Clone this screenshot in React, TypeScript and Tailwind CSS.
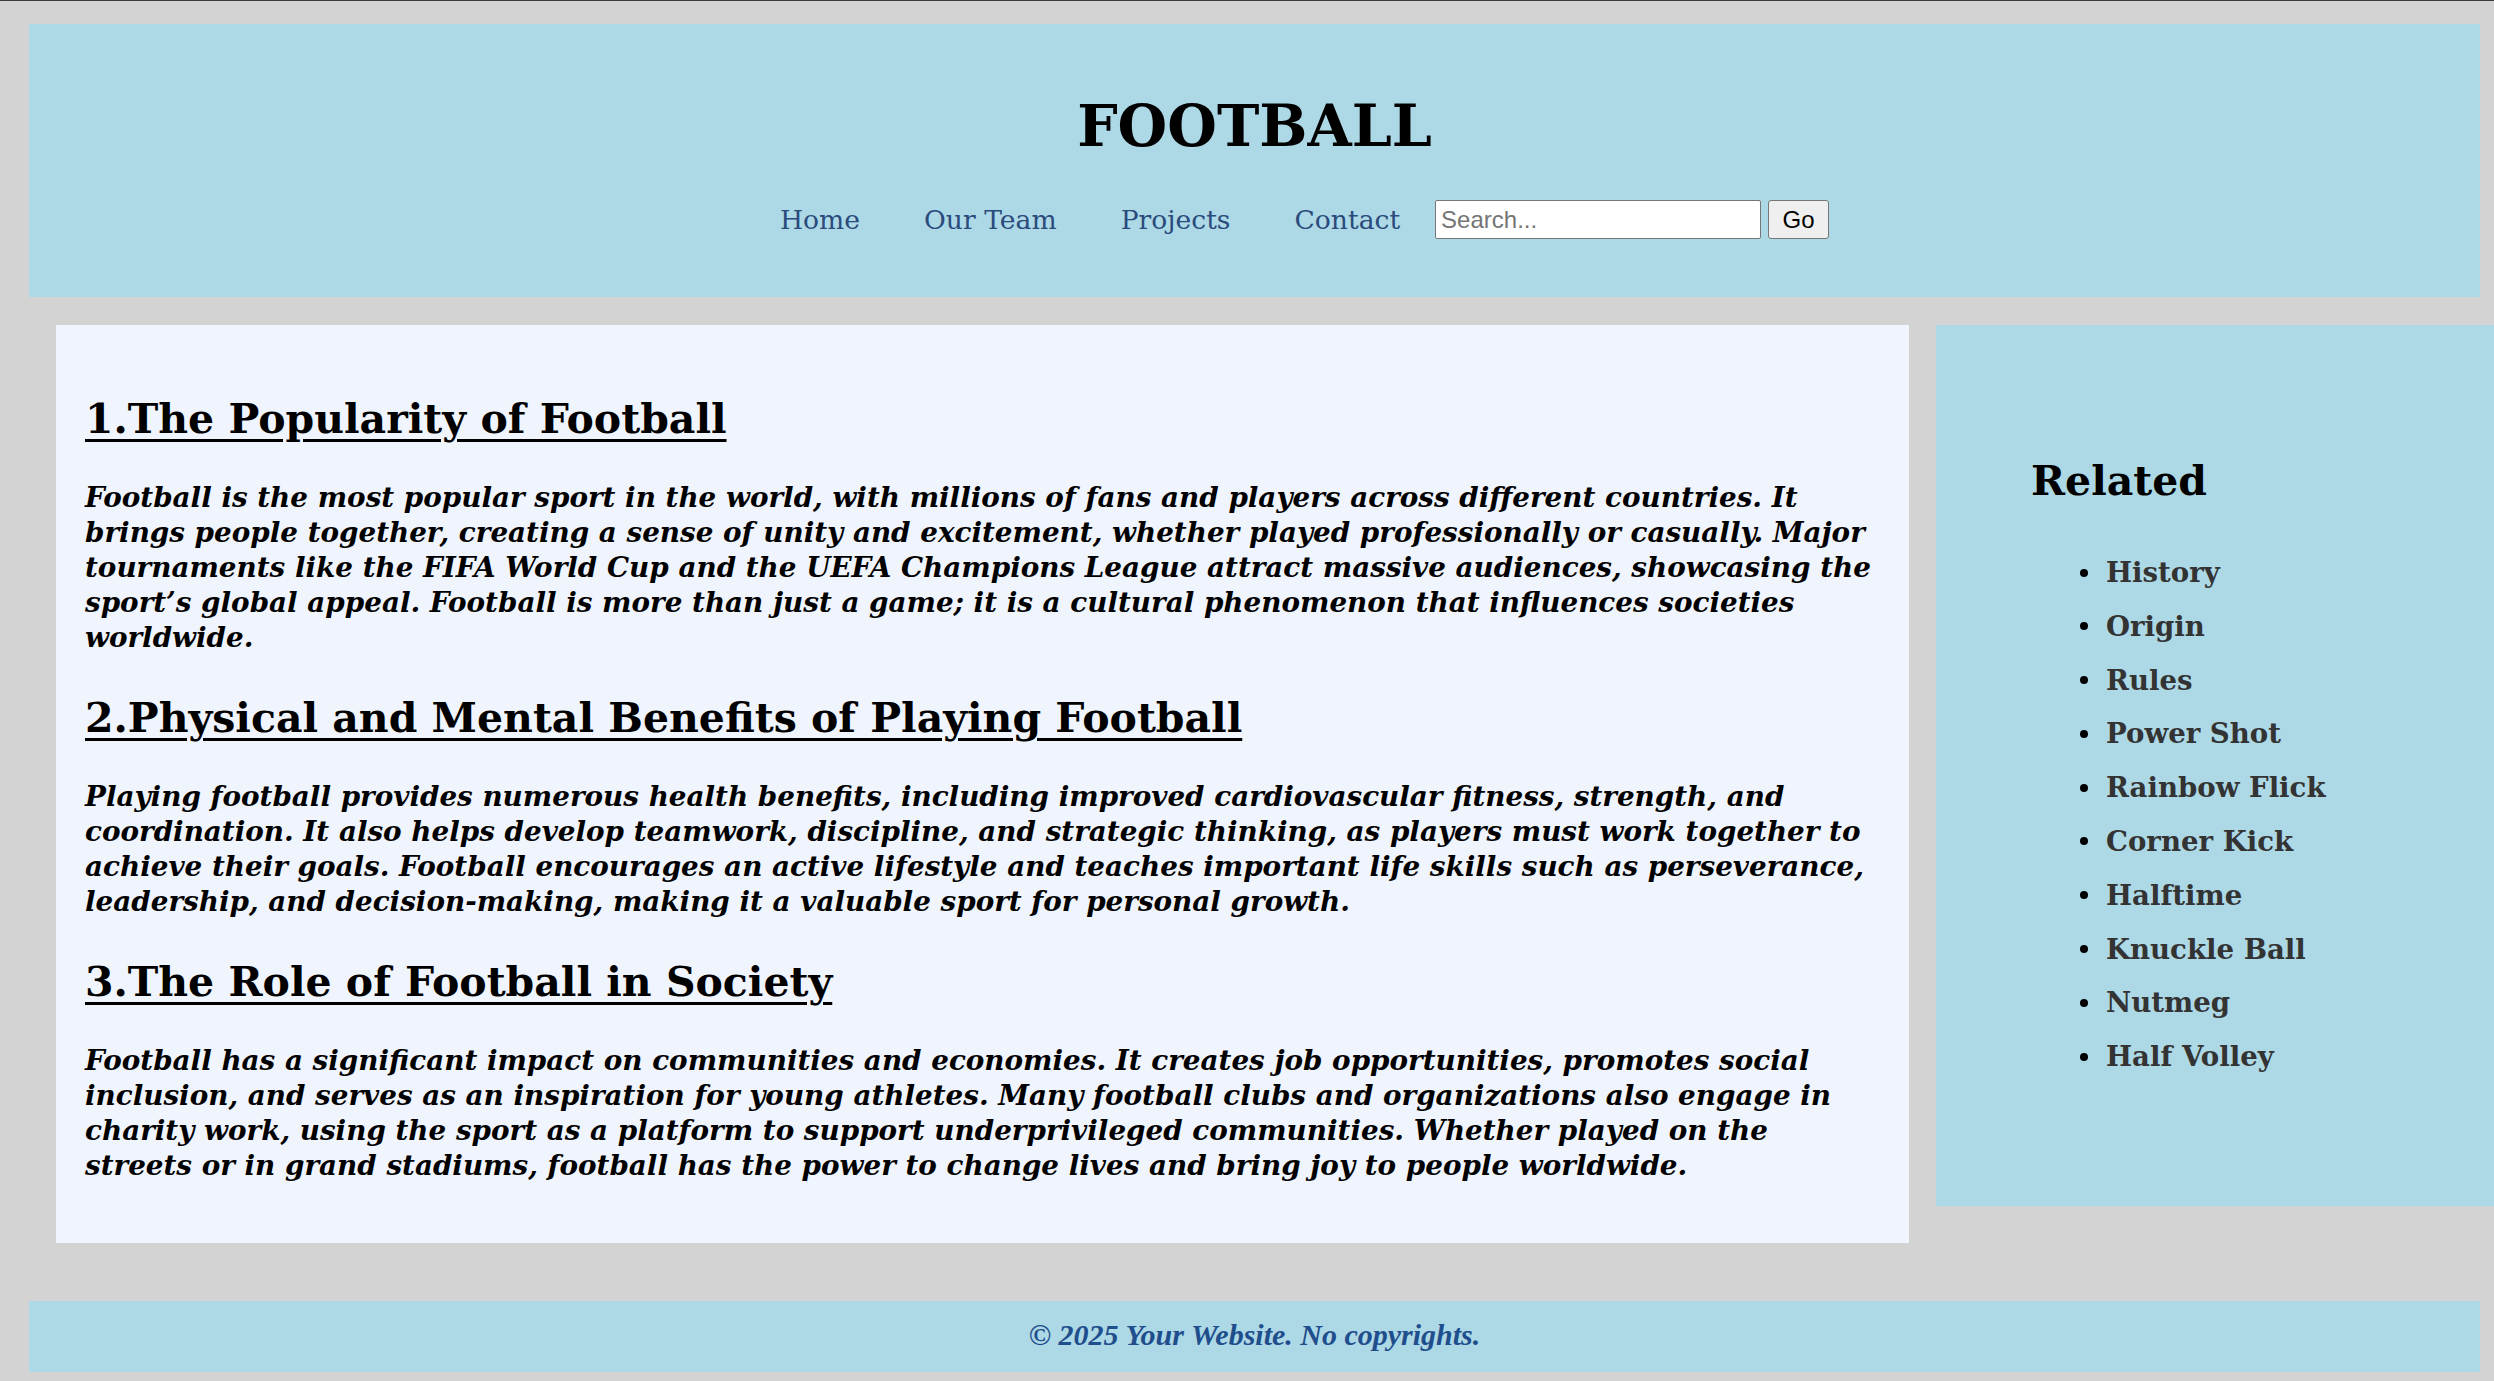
import React from "react";

const related = [
  "History",
  "Origin",
  "Rules",
  "Power Shot",
  "Rainbow Flick",
  "Corner Kick",
  "Halftime",
  "Knuckle Ball",
  "Nutmeg",
  "Half Volley",
];

// lines kept as they wrap in the design
const sections = [
  {
    title: "1.The Popularity of Football",
    lines: [
      "Football is the most popular sport in the world, with millions of fans and players across different countries. It",
      "brings people together, creating a sense of unity and excitement, whether played professionally or casually. Major",
      "tournaments like the FIFA World Cup and the UEFA Champions League attract massive audiences, showcasing the",
      "sport’s global appeal. Football is more than just a game; it is a cultural phenomenon that influences societies",
      "worldwide.",
    ],
  },
  {
    title: "2.Physical and Mental Benefits of Playing Football",
    lines: [
      "Playing football provides numerous health benefits, including improved cardiovascular fitness, strength, and",
      "coordination. It also helps develop teamwork, discipline, and strategic thinking, as players must work together to",
      "achieve their goals. Football encourages an active lifestyle and teaches important life skills such as perseverance,",
      "leadership, and decision-making, making it a valuable sport for personal growth.",
    ],
  },
  {
    title: "3.The Role of Football in Society",
    lines: [
      "Football has a significant impact on communities and economies. It creates job opportunities, promotes social",
      "inclusion, and serves as an inspiration for young athletes. Many football clubs and organizations also engage in",
      "charity work, using the sport as a platform to support underprivileged communities. Whether played on the",
      "streets or in grand stadiums, football has the power to change lives and bring joy to people worldwide.",
    ],
  },
];

const App = () => {
  return (
    <div className="min-h-screen bg-[#d3d3d3] border-t border-[#3a3a3a] pb-[10px] font-['DejaVu_Serif',serif] overflow-hidden">
      {/* header */}
      <header className="mt-[23px] ml-[29px] mr-[14px] bg-[#add8e6] pt-[68px] pb-[58px]">
        <h1 className="text-center text-[57px] leading-[68px] font-bold text-black">FOOTBALL</h1>
        <nav className="mt-[40px] flex items-center justify-center pl-[100px]">
          <a href="#" className="text-[26.6px] leading-[31px] text-[#2a4b7c]">Home</a>
          <a href="#" className="ml-[64px] text-[26.6px] leading-[31px] text-[#2a4b7c]">Our Team</a>
          <a href="#" className="ml-[64px] text-[26.6px] leading-[31px] text-[#2a4b7c]">Projects</a>
          <a href="#" className="ml-[64px] text-[26.6px] leading-[31px] text-[#2a4b7c]">Contact</a>
          <input
            type="text"
            placeholder="Search..."
            className="ml-[35px] w-[326px] h-[39px] border border-[#767676] rounded-[2px] bg-white px-[5px] text-[24px] font-['Liberation_Sans',Arial,sans-serif] placeholder:text-[#757575] outline-none"
          />
          <button className="ml-[7px] w-[61px] h-[39px] border border-[#767676] rounded-[3px] bg-[#efefef] text-[24px] text-black font-['Liberation_Sans',Arial,sans-serif]">
            Go
          </button>
        </nav>
      </header>

      {/* content */}
      <div className="mt-[28px] flex items-start pl-[56px] gap-[27px]">
        <main className="w-[1853px] shrink-0 bg-[#f0f4fc] px-[29px] pt-[29px] pb-[60px]">
          {sections.map((s, i) => (
            <section key={i}>
              <h2 className={`${i === 0 ? "mt-[39px]" : "mt-[37px]"} mb-[35px] text-[41px] leading-[52px] font-bold underline decoration-[3px] underline-offset-[6px] text-black`}>
                {s.title}
              </h2>
              <p className="text-[27.8px] leading-[35px] font-bold italic text-black whitespace-nowrap">
                {s.lines.map((l, j) => (
                  <React.Fragment key={j}>
                    {l}
                    {j < s.lines.length - 1 && <br />}
                  </React.Fragment>
                ))}
              </p>
            </section>
          ))}
        </main>

        <aside className="w-[558px] shrink-0 bg-[#add8e6] pl-[95px] pt-[130px] pb-[132px]">
          <h2 className="text-[41px] leading-[52px] font-bold text-black">Related</h2>
          <ul className="mt-[48px] flex flex-col gap-[18.8px]">
            {related.map((r) => (
              <li key={r} className="flex items-center pl-[49px]">
                <span className="w-[8px] h-[8px] rounded-full bg-black mr-[18px]"></span>
                <a href="#" className="text-[27.6px] leading-[35px] font-bold text-[#333]">{r}</a>
              </li>
            ))}
          </ul>
        </aside>
      </div>

      {/* footer */}
      <footer className="mt-[58px] ml-[29px] mr-[14px] bg-[#add8e6] pt-[17px] pb-[20px] text-center">
        <p className="text-[30px] leading-[34px] font-bold italic text-[#1f4e8c] font-['Liberation_Serif','Times_New_Roman',serif]">
          © 2025 Your Website. No copyrights.
        </p>
      </footer>
    </div>
  );
};

export default App;
